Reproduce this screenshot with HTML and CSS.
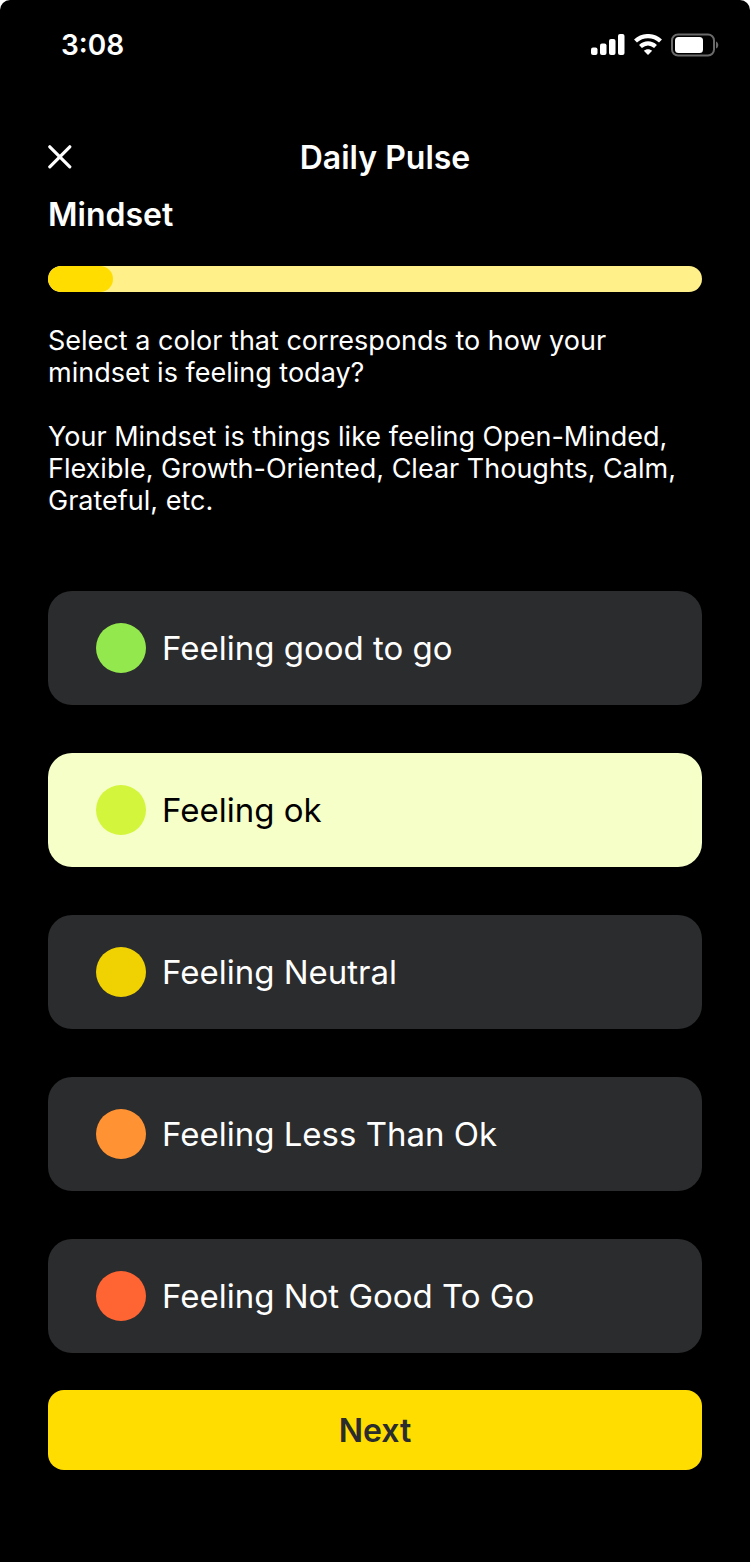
FILE: index.html
```html
<!DOCTYPE html>
<html lang="en">
<head>
<meta charset="utf-8">
<meta name="viewport" content="width=device-width, initial-scale=1">
<title>Daily Pulse</title>
<link rel="stylesheet" href="styles.css">
</head>
<body>
<div class="screen">
  <div class="status">
    <time class="clock">3:08</time>
    <div class="indicators">
      <svg width="34" height="22" viewBox="0 0 34 22" fill="#fff" aria-hidden="true">
        <rect x="0" y="13.500" width="6.500" height="7.500" rx="2"/><rect x="9" y="9.500" width="6.500" height="11.500" rx="2"/><rect x="18" y="5" width="6.500" height="16" rx="2"/><rect x="27" y="0" width="6.500" height="21" rx="2"/>
      </svg>
      <svg width="30" height="22" viewBox="0 0 30 22" aria-hidden="true">
        <path d="M2.500 7C9.500 0.500 20.500 0.500 27.500 7M7.500 12.500C12 8.500 18 8.500 22.500 12.500" fill="none" stroke="#fff" stroke-width="4.300"/>
        <path d="M15 21 10.800 16.800C13 14.600 17 14.600 19.200 16.800Z" fill="#fff"/>
      </svg>
      <svg width="48" height="24" viewBox="0 0 48 24" aria-hidden="true">
        <rect x="1" y="1.500" width="42" height="21" rx="6" fill="none" stroke="#6a6a6a" stroke-width="2"/>
        <rect x="4" y="4" width="28" height="16" rx="3.500" fill="#fff"/>
        <path d="M45 8.500c3 1 3 6 0 7z" fill="#6a6a6a"/>
      </svg>
    </div>
  </div>
  <form class="content">
    <header class="header">
      <button type="button" class="close" aria-label="Close">
        <svg width="24" height="24" viewBox="0 0 24 24" fill="none" stroke="#fff" stroke-width="3.200" stroke-linecap="round" aria-hidden="true"><path d="M1.800 1.800 21.800 21.800M21.800 1.800 1.800 21.800"/></svg>
      </button>
      <h1 class="title">Daily Pulse</h1>
    </header>
    <h2 class="section">Mindset</h2>
    <div class="progress" role="progressbar" aria-label="Progress" aria-valuenow="10" aria-valuemin="0" aria-valuemax="100"><div class="bar" style="width: 10%"></div></div>
    <p class="copy">Select a color that corresponds to how your<br>mindset is feeling today?</p>
    <p class="copy">Your Mindset is things like feeling Open-Minded,<br>Flexible, Growth-Oriented, Clear Thoughts, Calm,<br>Grateful, etc.</p>
    <div class="options" role="radiogroup" aria-label="Mindset">
      <label class="option"><input class="dot green" type="radio" name="mindset">Feeling good to go</label>
      <label class="option"><input class="dot lime" type="radio" name="mindset" checked>Feeling ok</label>
      <label class="option"><input class="dot yellow" type="radio" name="mindset">Feeling Neutral</label>
      <label class="option"><input class="dot orange" type="radio" name="mindset">Feeling Less Than Ok</label>
      <label class="option"><input class="dot red" type="radio" name="mindset">Feeling Not Good To Go</label>
    </div>
    <button type="submit" class="next">Next</button>
  </form>
</div>
</body>
</html>
```
FILE: styles.css
```css
* { box-sizing: border-box; }
body { margin: 0; background: #fff; color: #fff; font-family: Inter, "Liberation Sans", sans-serif; }
.screen { min-height: 100vh; background: #000; border-radius: 10px 10px 0 0; }
.status { display: flex; justify-content: space-between; align-items: center; height: 90px; padding: 0 31px 0 61px; }
.clock { font-size: 28px; font-weight: 600; line-height: 32px; }
.indicators { display: flex; align-items: center; gap: 8px; }
.content { padding: 46px 48px 90px; }
.header { display: grid; grid-template-columns: 24px 1fr 4px; align-items: center; height: 40px; }
.close { display: flex; width: 24px; height: 24px; padding: 0; border: 0; background: none; cursor: pointer; }
.title { margin: 0; padding-top: 2px; text-align: center; font-size: 32px; font-weight: 600; line-height: 40px; }
.section { margin: 18px 0 30px; font-size: 32px; font-weight: 600; line-height: 42px; }
.progress { height: 26px; margin-bottom: 33px; border-radius: 13px; background: #fff08a; overflow: hidden; }
.bar { height: 100%; border-radius: 13px; background: #ffdd00; }
.copy { margin: 0 0 32px; font-size: 27px; line-height: 32px; }
.options { display: grid; gap: 48px; margin-top: 74px; }
.option { display: flex; align-items: center; gap: 16px; padding: 32px 48px; border-radius: 24px; background: #2b2c2e; font-size: 33px; line-height: 40px; cursor: pointer; }
.option:has(:checked) { background: #f6ffc8; color: #000; }
.dot { appearance: none; flex: none; width: 50px; height: 50px; margin: 0; border-radius: 50%; cursor: pointer; }
.green { background: #93e84d; }
.lime { background: #d3f53c; }
.yellow { background: #f0d203; }
.orange { background: #ff9233; }
.red { background: #ff6433; }
.next { display: block; width: 100%; height: 80px; margin-top: 37px; border: 0; border-radius: 16px; background: #ffdd00; color: #2b2c2e; font: inherit; font-size: 32px; font-weight: 600; cursor: pointer; }
```
